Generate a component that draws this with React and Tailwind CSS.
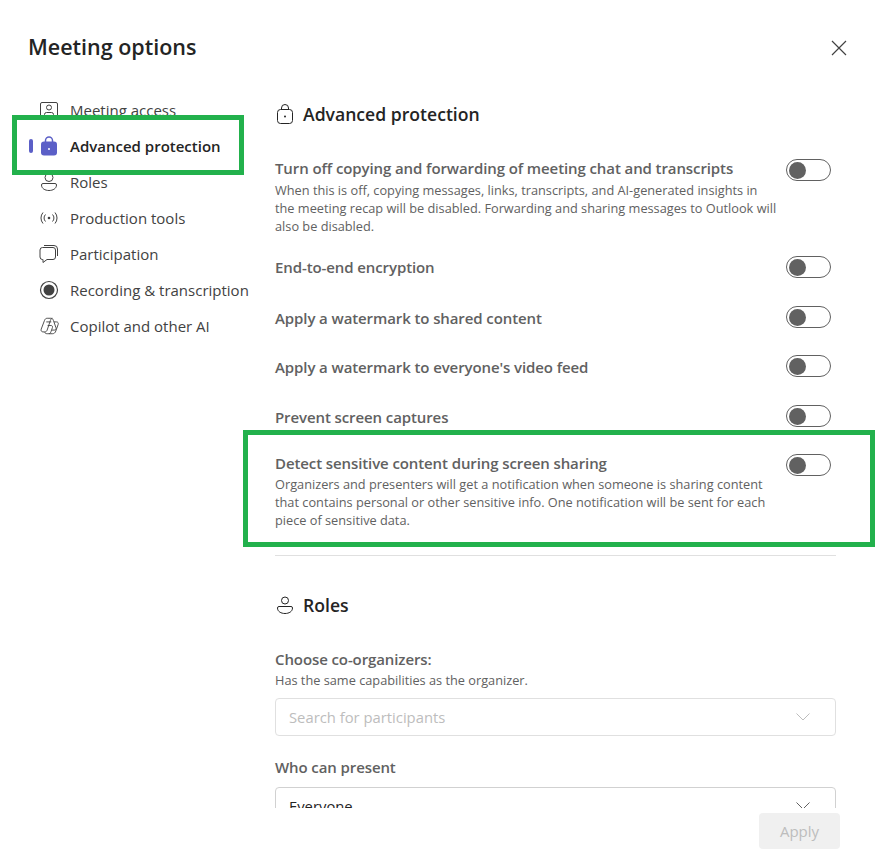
import React from "react";

const navItems = [
  { label: "Meeting access", icon: "access" },
  { label: "Advanced protection", icon: "lock", active: true },
  { label: "Roles", icon: "person" },
  { label: "Production tools", icon: "broadcast" },
  { label: "Participation", icon: "chat" },
  { label: "Recording & transcription", icon: "record" },
  { label: "Copilot and other AI", icon: "copilot" },
];

const NavIcon = ({ name }) => {
  const common = { width: 20, height: 20, viewBox: "0 0 20 20", fill: "none", stroke: "#424242", strokeWidth: 1 };
  if (name === "access")
    return (
      <svg {...common}>
        <rect x="1.5" y="2.5" width="17" height="15" rx="1.5" />
        <circle cx="10" cy="7.5" r="2.5" />
        <path d="M5.5 17v-2.5a2 2 0 0 1 2-2h5a2 2 0 0 1 2 2V17" />
      </svg>
    );
  if (name === "lock")
    return (
      <svg {...common} stroke="none">
        <path d="M6.5 6V4.5a3.5 3.5 0 0 1 7 0V6" fill="none" stroke="#5b5fc7" strokeWidth="1.5" />
        <rect x="2" y="5.5" width="16" height="14" rx="3" fill="#5b5fc7" />
        <circle cx="10" cy="13" r="1" fill="#fff" />
      </svg>
    );
  if (name === "person")
    return (
      <svg {...common}>
        <circle cx="10" cy="5.5" r="4" />
        <path d="M4 11.5h12a1.5 1.5 0 0 1 1.5 1.5c0 3.5-3.5 5.5-7.5 5.5S2.5 16.5 2.5 13A1.5 1.5 0 0 1 4 11.5Z" />
      </svg>
    );
  if (name === "broadcast")
    return (
      <svg {...common}>
        <circle cx="10" cy="10" r="1.3" fill="#424242" stroke="none" />
        <path d="M6.5 6.5a5 5 0 0 0 0 7M13.5 6.5a5 5 0 0 1 0 7M4 4.5a8.5 8.5 0 0 0 0 11M16 4.5a8.5 8.5 0 0 1 0 11" />
      </svg>
    );
  if (name === "chat")
    return (
      <svg {...common}>
        <path d="M5 1.5h10a3.5 3.5 0 0 1 3.5 3.5v7" />
        <path d="M3.5 3.5h10.5a2.5 2.5 0 0 1 2.5 2.5v7a2.5 2.5 0 0 1-2.5 2.5H8l-4 3v-3h-.5A2.5 2.5 0 0 1 1 13V6a2.5 2.5 0 0 1 2.5-2.5Z" />
      </svg>
    );
  if (name === "record")
    return (
      <svg {...common}>
        <circle cx="10" cy="10" r="8.5" strokeWidth="1.2" />
        <circle cx="10" cy="10" r="5.5" fill="#424242" stroke="none" />
      </svg>
    );
  return (
    <svg {...common} width="22" height="20" viewBox="0 0 22 20">
      <path d="M9 1.5h4c1.5 0 2.3.8 2.800 2.300l2.900 8.200c.5 1.500-.4 2.500-1.800 2.500h-2.600" />
      <path d="M9 1.500c-1.500 0-2.400.9-2.900 2.300L2.400 13.500c-.6 1.700.5 3 2 3h1.800c1.500 0 2.300-.7 2.800-2.100L12.500 4c.4-1.200 1-2.500 2.300-2.500" />
      <path d="M8 5.500h5.500M16.500 5.500h2.800c1.500 0 2.300 1.200 1.800 2.700l-2.600 7.300c-.7 2-1.900 3-3.800 3H9c-1.500 0-2.500-.8-3-2M9.500 9.500h3.800c1.300 0 1.900 1 1.500 2.200l-1.600 4.500c-.5 1.300-1.100 2.100-2.200 2.300" />
    </svg>
  );
};

const Toggle = () => (
  <div className="w-[45px] h-[22px] rounded-full border border-[#616161] flex items-center pl-[2px] shrink-0">
    <div className="w-[17px] h-[17px] rounded-full bg-[#616161]" />
  </div>
);

const Chevron = ({ color }) => (
  <svg width="14" height="8" viewBox="0 0 14 8" fill="none" stroke={color} strokeWidth="1">
    <path d="M0.5 0.5L7 7L13.5 0.5" />
  </svg>
);

const Row = ({ title, lines, className, toggleClass, descClass }) => (
  <div className={"flex justify-between items-start " + className}>
    <div>
      <div className="text-[15px] leading-[20px] font-semibold text-[#616161] tracking-[-0.1px] whitespace-nowrap">{title}</div>
      {lines && (
        <div className={descClass}>
          {lines.map((line) => (
            <div key={line} className="text-[12.75px] leading-[18px] text-[#616161] whitespace-nowrap">
              {line}
            </div>
          ))}
        </div>
      )}
    </div>
    <div className={"mr-[5px] " + toggleClass}>
      <Toggle />
    </div>
  </div>
);

const App = () => {
  return (
    <div className="relative w-[881px] h-[861px] bg-white overflow-hidden flex flex-col font-['Open_Sans',sans-serif]">
      <div className="flex items-center justify-between h-[94px] pt-[2px] pl-[28px] pr-[34px] shrink-0">
        <h1 className="-mt-[2px] text-[21.5px] font-semibold text-[#242424]">Meeting options</h1>
        <svg width="16" height="16" viewBox="0 0 16 16" fill="none" stroke="#424242" strokeWidth="1.2">
          <path d="M1 1L15 15M15 1L1 15" />
        </svg>
      </div>

      <div className="flex h-[714px] overflow-hidden shrink-0">
        <nav className="w-[275px] shrink-0 pl-[29px] -mt-[2px]">
          {navItems.map((item) => (
            <div key={item.label} className="flex items-center h-[36px]">
              <div className={"w-[4px] h-[14px] rounded-full mr-[6px] " + (item.active ? "bg-[#5b5fc7]" : "")} />
              <div className="w-[20px] flex justify-center">
                <NavIcon name={item.icon} />
              </div>
              <span
                className={
                  "ml-[11px] text-[15px] whitespace-nowrap " +
                  (item.active ? "font-semibold text-[#242424]" : "text-[#424242]")
                }
              >
                {item.label}
              </span>
            </div>
          ))}
        </nav>

        <main className="w-[561px] shrink-0">
          <div className="flex items-center gap-[8px] h-[24px] mt-[8px]">
            <svg width="20" height="22" viewBox="0 0 20 22" fill="none" stroke="#242424" strokeWidth="1">
              <path d="M6.5 7V5a3.5 3.5 0 0 1 7 0v2" />
              <rect x="2.5" y="6.5" width="15" height="14" rx="3" />
              <circle cx="10" cy="13.5" r="1" fill="#242424" stroke="none" />
            </svg>
            <h2 className="text-[17.6px] font-semibold text-[#242424]">Advanced protection</h2>
          </div>

          <Row
            className="mt-[32px]"
            toggleClass="mt-[1px]"
            descClass="mt-[3px]"
            title="Turn off copying and forwarding of meeting chat and transcripts"
            lines={[
              "When this is off, copying messages, links, transcripts, and AI-generated insights in",
              "the meeting recap will be disabled. Forwarding and sharing messages to Outlook will",
              "also be disabled.",
            ]}
          />
          <Row className="mt-[22px]" toggleClass="-mt-[1px]" title="End-to-end encryption" />
          <Row className="mt-[30px]" toggleClass="-mt-[2px]" title="Apply a watermark to shared content" />
          <Row className="mt-[29px]" toggleClass="-mt-[2px]" title="Apply a watermark to everyone's video feed" />
          <Row className="mt-[30px]" toggleClass="-mt-[2px]" title="Prevent screen captures" />
          <Row
            className="mt-[26px]"
            toggleClass="mt-[1px]"
            descClass="mt-[2px]"
            title="Detect sensitive content during screen sharing"
            lines={[
              "Organizers and presenters will get a notification when someone is sharing content",
              "that contains personal or other sensitive info. One notification will be sent for each",
              "piece of sensitive data.",
            ]}
          />

          <div className="border-t border-[#e0e0e0] mt-[26px]" />

          <div className="flex items-center gap-[8px] h-[24px] mt-[37px]">
            <svg width="20" height="20" viewBox="0 0 20 20" fill="none" stroke="#242424" strokeWidth="1">
              <circle cx="10" cy="5.5" r="3.5" />
              <path d="M4 11.5h12a1.5 1.5 0 0 1 1.5 1.5c0 3.5-3.5 5.5-7.5 5.5S2.5 16.5 2.5 13A1.5 1.5 0 0 1 4 11.5Z" />
            </svg>
            <h2 className="text-[17.6px] font-semibold text-[#242424]">Roles</h2>
          </div>

          <div className="mt-[32px] text-[15px] leading-[20px] font-semibold text-[#616161] tracking-[-0.1px]">Choose co-organizers:</div>
          <div className="text-[12.75px] leading-[18px] text-[#616161] mt-[2px]">Has the same capabilities as the organizer.</div>
          <div className="mt-[9px] h-[38px] border border-[#e0e0e0] rounded-[4px] flex items-center justify-between pl-[13px] pr-[25px]">
            <span className="text-[14.8px] text-[#bdbdbd]">Search for participants</span>
            <Chevron color="#bdbdbd" />
          </div>

          <div className="mt-[21px] text-[15px] leading-[20px] font-semibold text-[#616161] tracking-[-0.1px]">Who can present</div>
          <div className="mt-[10px] h-[38px] border border-[#d1d1d1] rounded-[4px] flex items-center justify-between pl-[13px] pr-[25px]">
            <span className="text-[14.8px] text-[#242424]">Everyone</span>
            <Chevron color="#616161" />
          </div>
        </main>
      </div>

      <div className="flex justify-end pr-[41px] pt-[5px]">
        <button className="w-[81px] h-[36px] rounded-[4px] bg-[#f0f0f0] text-[15px] text-[#bdbdbd]">Apply</button>
      </div>

      <div className="absolute left-[12px] top-[115px] w-[232px] h-[60px] border-[5px] border-[#22b14c]" />
      <div className="absolute left-[243px] top-[430px] w-[632px] h-[117px] border-[5px] border-[#22b14c]" />
    </div>
  );
};

export default App;
